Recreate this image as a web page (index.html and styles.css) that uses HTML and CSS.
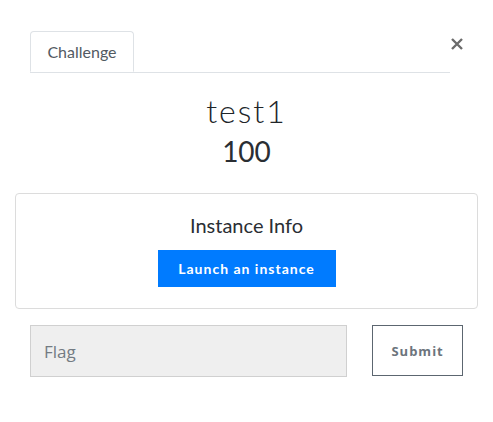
FILE: index.html
```html
<!DOCTYPE html>
<html>
<head>
<meta charset="utf-8">
<link rel="stylesheet" href="styles.css">
</head>
<body>
<div class="modal">
  <div class="header">
    <div class="nav">
      <div class="tab">Challenge</div>
    </div>
    <button class="close" aria-label="Close">
      <svg width="12" height="12" viewBox="0 0 12 12"><path d="M1 1L11 11M11 1L1 11" stroke="#6b6b6b" stroke-width="2.4" stroke-linecap="butt"/></svg>
    </button>
  </div>
  <h2 class="title">test1</h2>
  <h3 class="value">100</h3>
  <div class="instance">
    <h4 class="instance-title">Instance Info</h4>
    <button class="launch">Launch an instance</button>
  </div>
  <div class="flag-row">
    <input class="flag" type="text" placeholder="Flag">
    <button class="submit">Submit</button>
  </div>
</div>
</body>
</html>
```
FILE: styles.css
```css
html, body {
  margin: 0;
  padding: 0;
  background: #fff;
}
body {
  font-family: Lato, "Open Sans", sans-serif;
  color: #212529;
}
.modal {
  width: 493px;
  height: 422px;
  box-sizing: border-box;
  padding: 31px 15px 0 15px;
}
.header {
  display: flex;
  align-items: flex-start;
  padding: 0 15px;
}
.nav {
  flex: 1;
  display: flex;
  border-bottom: 1px solid #dee2e6;
  height: 41px;
}
.tab {
  height: 41px;
  box-sizing: border-box;
  width: 104px;
  border: 1px solid #dee2e6;
  border-bottom: 1px solid #fff;
  border-radius: 4px 4px 0 0;
  font-size: 16px;
  color: #525a62;
  display: flex;
  align-items: center;
  justify-content: center;
  padding-bottom: 1px;
  margin-bottom: -1px;
  background: #fff;
}
.close {
  border: none;
  background: none;
  padding: 0;
  margin: 7px 0 0 1px;
  width: 12px;
  height: 12px;
  display: flex;
}
.title {
  margin: 18px 0 0 0;
  text-align: center;
  font-weight: 300;
  font-size: 32px;
  letter-spacing: 2px;
  line-height: 40px;
  color: #212529;
}
.value {
  margin: 0;
  text-align: center;
  font-weight: 400;
  font-size: 28px;
  line-height: 40px;
  color: #2a2e33;
}
.instance {
  margin-top: 22px;
  border: 1px solid #dcdcdc;
  border-radius: 4px;
  height: 116px;
  box-sizing: border-box;
  display: flex;
  flex-direction: column;
  align-items: center;
}
.instance-title {
  margin: 18px 0 0 0;
  font-weight: 400;
  font-size: 20px;
  line-height: 26px;
  color: #2a2e33;
}
.launch {
  margin-top: 12px;
  width: 178px;
  height: 37px;
  border: none;
  border-radius: 0;
  background: #007bff;
  color: #fff;
  font-family: Lato, sans-serif;
  font-weight: 700;
  font-size: 14px;
  letter-spacing: 1px;
}
.flag-row {
  display: flex;
  align-items: flex-start;
  margin-top: 16px;
  padding: 0 15px;
}
.flag {
  width: 318px;
  height: 52px;
  box-sizing: border-box;
  border: 1px solid #d0d0d0;
  background: #efefef;
  border-radius: 0;
  padding: 0 13px;
  font-family: "Open Sans", Lato, sans-serif;
  font-size: 17px;
  color: #495057;
  outline: none;
}
.flag::placeholder {
  color: #737b83;
}
.submit {
  margin-left: 25px;
  width: 91px;
  height: 51px;
  box-sizing: border-box;
  border: 1px solid #5c6670;
  background: #fff;
  border-radius: 0;
  font-family: "Open Sans", Lato, sans-serif;
  font-weight: 700;
  font-size: 13px;
  letter-spacing: 1px;
  color: #6c747c;
}
```
